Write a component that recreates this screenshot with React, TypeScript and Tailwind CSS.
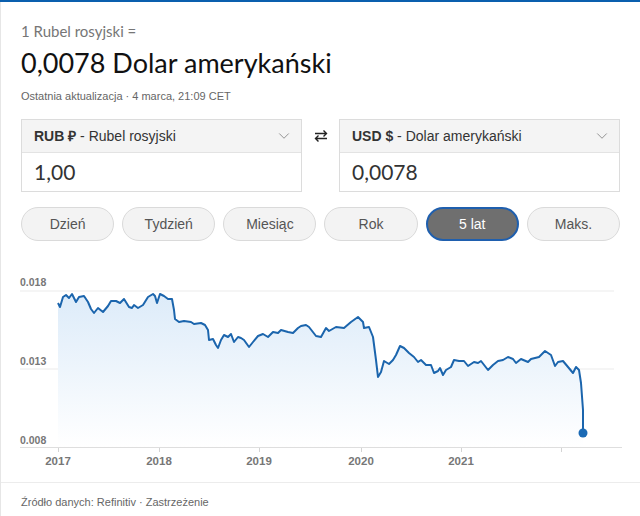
import { ChevronDown } from "lucide-react";

const periods = ["Dzień", "Tydzień", "Miesiąc", "Rok", "5 lat", "Maks."];

// page coordinates of the 5-year line (x, y)
const pts: [number, number][] = [
  [57, 303], [59, 307], [62, 297], [65, 295], [68, 298], [71, 294], [75, 302], [78, 297],
  [83, 296], [87, 302], [90, 309], [93, 313], [97, 308], [102, 312], [107, 306], [110, 301],
  [115, 301], [119, 303], [123, 299], [128, 307], [131, 308], [133, 305], [137, 308], [142, 305],
  [147, 297], [152, 294], [154, 296], [156, 303], [159, 294], [163, 296], [167, 299], [171, 299],
  [173, 310], [174, 319], [178, 322], [183, 321], [190, 322], [193, 324], [200, 323], [204, 325],
  [207, 330], [208, 340], [212, 339], [215, 345], [217, 348], [220, 340], [223, 335], [227, 337],
  [230, 334], [233, 342], [237, 337], [240, 338], [243, 340], [248, 347], [252, 342], [257, 336],
  [262, 334], [267, 337], [272, 332], [277, 333], [280, 330], [287, 332], [292, 333], [297, 328],
  [300, 326], [305, 325], [308, 327], [315, 336], [320, 337], [325, 328], [328, 331], [335, 327],
  [343, 328], [350, 322], [357, 317], [362, 322], [363, 328], [368, 327], [372, 337], [375, 360],
  [377, 377], [380, 372], [383, 361], [388, 364], [392, 360], [395, 355], [399, 346], [403, 348],
  [408, 353], [413, 357], [417, 362], [420, 360], [425, 365], [430, 365], [433, 373], [437, 371],
  [439, 368], [442, 375], [445, 370], [450, 367], [453, 360], [458, 361], [463, 361], [467, 366],
  [473, 362], [477, 363], [480, 361], [487, 370], [492, 365], [497, 361], [502, 360], [507, 357],
  [512, 359], [515, 363], [520, 359], [527, 362], [530, 359], [538, 357], [544, 351], [550, 355],
  [554, 366], [557, 362], [562, 361], [567, 367], [572, 373], [575, 367], [578, 370], [580, 383],
  [582, 410], [582, 433],
];

const linePath = pts.map(([x, y], i) => `${i ? "L" : "M"}${x} ${y}`).join(" ");
const areaPath = `${linePath} L582 447 L57 447 Z`;

const years = [
  { x: 57, label: "2017" },
  { x: 158, label: "2018" },
  { x: 258, label: "2019" },
  { x: 360, label: "2020" },
  { x: 460, label: "2021" },
  { x: 560, label: "" },
];

function CurrencyBox({ code, name, value }: { code: string; name: string; value: string }) {
  return (
    <div className="flex-1 border border-[#dcdcdc] bg-white">
      <div className="flex h-[33px] items-center justify-between border-b border-[#e3e3e3] bg-[#f4f4f4] pl-3 pr-2 font-['Liberation_Sans',Arial,sans-serif] text-[14px] text-[#333]">
        <span>
          <b className="font-bold">{code}</b> - {name}
        </span>
        <ChevronDown size={18} strokeWidth={1.2} className="text-[#888]" />
      </div>
      <div className="flex h-[38px] items-center pl-3 font-['Lato',sans-serif] text-[21px] text-[#333]">
        {value}
      </div>
    </div>
  );
}

export default function App() {
  return (
    <div className="h-[516px] w-[640px] overflow-hidden bg-white">
      <div className="h-[2px] bg-[#0a5fae]" />
      <div className="h-[514px] border-l border-[#e6e6e6]">
        <div className="px-5">
          <p className="pt-[19px] font-['Lato',sans-serif] text-[15px] leading-[20px] text-[#767676]">
            1 Rubel rosyjski =
          </p>
          <h1 className="mt-[5px] font-['Lato',sans-serif] text-[27px] leading-[34px] text-[#111]">
            0,0078 Dolar amerykański
          </h1>
          <p className="mt-[9px] font-['Liberation_Sans',Arial,sans-serif] text-[11px] leading-[14px] text-[#666]">
            Ostatnia aktualizacja · 4 marca, 21:09 CET
          </p>

          <div className="mt-[16px] flex items-start">
            <CurrencyBox code="RUB ₽" name="Rubel rosyjski" value="1,00" />
            <div className="flex h-[33px] w-[37px] items-center justify-center">
              <svg width="14" height="14" viewBox="0 0 14 14" fill="none" stroke="#222" strokeWidth="1.4">
                <path d="M1 4.5 H12.5 M9.5 1.5 L12.5 4.5 L9.5 7.5" />
                <path d="M13 9.5 H1.5 M4.5 6.5 L1.5 9.5 L4.5 12.5" />
              </svg>
            </div>
            <CurrencyBox code="USD $" name="Dolar amerykański" value="0,0078" />
          </div>

          <div className="mt-[15px] grid grid-cols-6 gap-2">
            {periods.map((p) => (
              <div
                key={p}
                className={
                  p === "5 lat"
                    ? "flex h-[34px] items-center justify-center rounded-full border-2 border-[#1f5fae] bg-[#6f6f6f] font-['Liberation_Sans',Arial,sans-serif] text-[14px] text-white"
                    : "flex h-[34px] items-center justify-center rounded-full border border-[#dadada] bg-[#f3f3f3] font-['Liberation_Sans',Arial,sans-serif] text-[14px] text-[#555]"
                }
              >
                {p}
              </div>
            ))}
          </div>
        </div>

        <svg
          className="mt-[21px] block"
          width="639"
          height="220"
          viewBox="0 262 639 220"
          fontFamily="'Liberation Sans', Arial, sans-serif"
        >
          <defs>
            <linearGradient id="area" x1="0" y1="291" x2="0" y2="447" gradientUnits="userSpaceOnUse">
              <stop offset="0" stopColor="#dcebf9" />
              <stop offset="1" stopColor="#ffffff" />
            </linearGradient>
          </defs>
          <line x1="19" y1="291" x2="613" y2="291" stroke="#ebebeb" />
          <line x1="19" y1="369" x2="613" y2="369" stroke="#ebebeb" />
          <path d={areaPath} fill="url(#area)" />
          <path d={linePath} fill="none" stroke="#1b65ad" strokeWidth="2" strokeLinejoin="round" />
          <circle cx="582" cy="433" r="4.5" fill="#1b6ab5" />
          <line x1="19" y1="447.5" x2="621" y2="447.5" stroke="#dedede" />
          {years.map((y) => (
            <g key={y.x}>
              <line x1={y.x + 0.5} y1="448" x2={y.x + 0.5} y2="452" stroke="#d4d4d4" />
              <text x={y.x} y="465" textAnchor="middle" fontSize="11.5" fontWeight="bold" fill="#777">
                {y.label}
              </text>
            </g>
          ))}
          <text x="19" y="286" fontSize="10.5" fontWeight="bold" fill="#777">0.018</text>
          <text x="19" y="365" fontSize="10.5" fontWeight="bold" fill="#777">0.013</text>
          <text x="19" y="444" fontSize="10.5" fontWeight="bold" fill="#777">0.008</text>
        </svg>

        <div className="border-t border-[#ececec] px-5 pt-[11px] font-['Liberation_Sans',Arial,sans-serif] text-[11px] text-[#666]">
          Źródło danych: Refinitiv · Zastrzeżenie
        </div>
      </div>
    </div>
  );
}
